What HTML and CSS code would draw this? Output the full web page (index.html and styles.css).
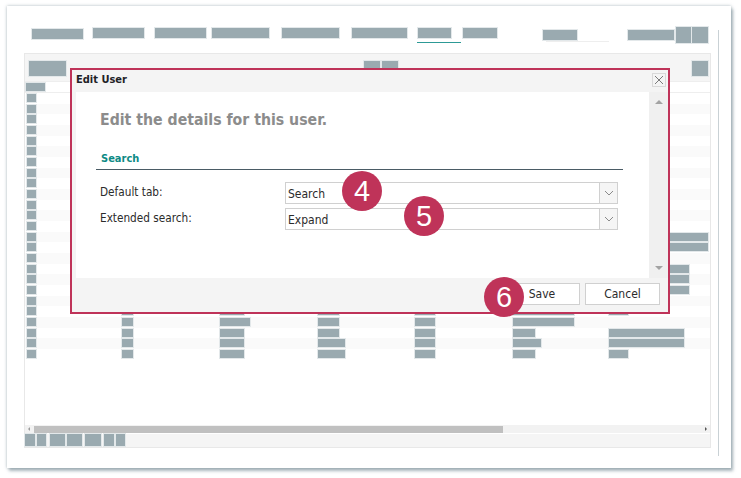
FILE: index.html
```html
<!DOCTYPE html>
<html lang="en">
<head>
<meta charset="utf-8">
<title>Edit User</title>
<link rel="stylesheet" href="styles.css">
</head>
<body>
<div class="page">
  <div class="frame">
    <div class="nav">
      <span class="bar w51 nav-low gap10"></span>
      <span class="bar w51 gap11"></span>
      <span class="bar w51 gap6"></span>
      <span class="bar w57 gap13"></span>
      <span class="bar w57 gap13"></span>
      <span class="bar w55 gap10"></span>
      <span class="tab gap2"><span class="bar w33"></span></span>
      <span class="bar w34 gap46"></span>
      <span class="search gap19"><span class="bar w34"></span></span>
      <span class="bar w46 nav-low gap2"></span>
      <span class="bar w15 nav-tall gap1"></span>
      <span class="bar w16 nav-tall"></span>
    </div>
    <div class="panel-wrap">
      <div class="panel">
        <div class="toolbar">
          <span class="bar w37 tool-main"></span>
          <span class="tool-mid"><span class="bar w16 tool-btn"></span><span class="bar w16 tool-btn"></span></span>
          <span class="bar w16 tool-btn"></span>
        </div>
        <div class="head"><span class="bar w19"></span></div>
        <div class="rows">
          <div class="row"><span class="bar w9"></span></div>
          <div class="row"><span class="bar w9"></span></div>
          <div class="row"><span class="bar w9"></span></div>
          <div class="row"><span class="bar w9"></span></div>
          <div class="row"><span class="bar w9"></span></div>
          <div class="row"><span class="bar w9"></span></div>
          <div class="row"><span class="bar w9"></span></div>
          <div class="row"><span class="bar w9"></span></div>
          <div class="row"><span class="bar w9"></span></div>
          <div class="row"><span class="bar w9"></span></div>
          <div class="row"><span class="bar w9"></span></div>
          <div class="row"><span class="bar w9"></span></div>
          <div class="row"><span class="bar w9"></span></div>
          <div class="row"><span class="bar w9"></span><i></i><i></i><i></i><i></i><i></i><span class="bar w99"></span></div>
          <div class="row"><span class="bar w9"></span><i></i><i></i><i></i><i></i><i></i><span class="bar w99"></span></div>
          <div class="row"><span class="bar w9"></span></div>
          <div class="row"><span class="bar w9"></span><i></i><i></i><i></i><i></i><i></i><span class="bar w80"></span></div>
          <div class="row"><span class="bar w9"></span><i></i><i></i><i></i><i></i><i></i><span class="bar w80"></span></div>
          <div class="row"><span class="bar w9"></span><i></i><i></i><i></i><i></i><i></i><span class="bar w80"></span></div>
          <div class="row"><span class="bar w9"></span></div>
          <div class="row"><span class="bar w9"></span><span class="bar w11"></span><span class="bar w24"></span><span class="bar w21"></span><span class="bar w20"></span><span class="bar w61"></span><span class="bar w19"></span></div>
          <div class="row"><span class="bar w9"></span><span class="bar w11"></span><span class="bar w30"></span><span class="bar w21"></span><span class="bar w20"></span><span class="bar w61"></span></div>
          <div class="row"><span class="bar w9"></span><span class="bar w11"></span><span class="bar w24"></span><span class="bar w21"></span><span class="bar w20"></span><span class="bar w22"></span><span class="bar w75"></span></div>
          <div class="row"><span class="bar w9"></span><span class="bar w11"></span><span class="bar w24"></span><span class="bar w27"></span><span class="bar w20"></span><span class="bar w28"></span><span class="bar w75"></span></div>
          <div class="row"><span class="bar w9"></span><span class="bar w11"></span><span class="bar w24"></span><span class="bar w27"></span><span class="bar w20"></span><span class="bar w22"></span><span class="bar w19"></span></div>
        </div>
        <div class="hscroll">
          <span class="arrow arrow-left"></span>
          <span class="thumb"></span>
          <span class="arrow arrow-right"></span>
        </div>
        <div class="pager">
          <span class="bar w10 gap2"></span>
          <span class="bar w9 gap4"></span>
          <span class="bar w15 gap2"></span>
          <span class="bar w15 gap3"></span>
          <span class="bar w16 gap3"></span>
          <span class="bar w10 gap2"></span>
          <span class="bar w9"></span>
        </div>
      </div>
      <div class="vline"></div>
    </div>
  </div>

  <div class="dialog">
    <div class="dialog-title">
      <span>Edit User</span>
      <span class="close">
        <svg width="10" height="10" viewBox="0 0 10 10"><path d="M1 1l8 8M9 1L1 9" stroke="#7b7b7b" stroke-width="1" fill="none"/></svg>
      </span>
    </div>
    <div class="dialog-body">
      <div class="content">
        <h1 class="heading">Edit the details for this user.</h1>
        <h2 class="section">Search</h2>
        <div class="field">
          <label class="field-label">Default tab:</label>
          <div class="select"><span class="select-value">Search</span><span class="select-btn"><svg width="10" height="6" viewBox="0 0 10 6"><path d="M1 1l4 4 4-4" stroke="#8a8a8a" stroke-width="1" fill="none"/></svg></span></div>
        </div>
        <div class="field">
          <label class="field-label">Extended search:</label>
          <div class="select"><span class="select-value">Expand</span><span class="select-btn"><svg width="10" height="6" viewBox="0 0 10 6"><path d="M1 1l4 4 4-4" stroke="#8a8a8a" stroke-width="1" fill="none"/></svg></span></div>
        </div>
      </div>
      <div class="vscroll">
        <span class="tri tri-up"></span>
        <span class="tri tri-down"></span>
      </div>
    </div>
    <div class="dialog-foot">
      <button class="btn btn-save">Save</button>
      <button class="btn btn-cancel">Cancel</button>
    </div>
  </div>

  <span class="badge badge-4">4</span>
  <span class="badge badge-5">5</span>
  <span class="badge badge-6">6</span>
</div>
</body>
</html>
```

FILE: styles.css
```css
* { box-sizing: border-box; }
html, body { margin: 0; padding: 0; background: #fff; }
body { font-family: "DejaVu Sans", sans-serif; font-stretch: condensed; color: #2b2b2b; }

.page { position: relative; width: 741px; height: 478px; overflow: hidden; }

.frame {
  margin: 6px 0 0 7px;
  width: 724px;
  height: 462px;
  padding-top: 22px;
  background: #fff;
  box-shadow: 0 0 3px rgba(120,140,150,.6), 2px 3px 3px rgba(120,140,150,.6);
}

.bar {
  display: block;
  flex: none;
  height: 8px;
  background: #9aaab0;
  box-shadow: 0 0 0 1px #e3e8ea;
}
.w9 { width: 9px; } .w10 { width: 10px; } .w11 { width: 11px; } .w15 { width: 15px; }
.w16 { width: 16px; } .w19 { width: 19px; } .w20 { width: 20px; } .w21 { width: 21px; }
.w22 { width: 22px; } .w24 { width: 24px; } .w27 { width: 27px; } .w28 { width: 28px; }
.w30 { width: 30px; } .w33 { width: 33px; } .w34 { width: 34px; } .w37 { width: 37px; }
.w46 { width: 46px; } .w51 { width: 51px; } .w55 { width: 55px; } .w57 { width: 57px; }
.w61 { width: 61px; } .w75 { width: 75px; } .w80 { width: 80px; } .w99 { width: 99px; }

.gap1 { margin-right: 1px; } .gap2 { margin-right: 2px; } .gap3 { margin-right: 3px; }
.gap4 { margin-right: 4px; } .gap6 { margin-right: 6px; } .gap10 { margin-right: 10px; }
.gap11 { margin-right: 11px; } .gap13 { margin-right: 13px; } .gap19 { margin-right: 19px; }
.gap46 { margin-right: 46px; }

.nav { display: flex; align-items: flex-start; height: 25px; padding-left: 25px; }
.nav .bar { height: 10px; }
.nav-low { margin-top: 1px; }
.nav .bar.nav-low { margin-top: 2px; }
.nav .bar:first-child.nav-low { margin-top: 1px; }
.nav .bar.nav-tall { height: 16px; margin-top: -1px; }
.tab { display: block; width: 44px; height: 15px; padding-left: 1px; border-bottom: 1px solid #2d9a96; flex: none; }
.search { display: block; width: 66px; height: 14px; margin-top: 2px; flex: none; }
.search .bar { margin-right: 0; }
.search::after { content: ""; display: block; width: 63px; height: 1px; margin: 1px 0 0 3px; background: #eeeeee; }

.panel-wrap { position: relative; padding-left: 17px; }
.panel {
  width: 687px;
  height: 395px;
  border: 1px solid #e8e8e8;
  display: flex;
  flex-direction: column;
}
.vline { position: absolute; left: 711px; top: -23px; width: 1px; height: 426px; background: #c9d1d5; }

.toolbar {
  height: 27px;
  flex: none;
  background: #f5f5f5;
  display: flex;
  align-items: flex-start;
  padding: 7px 2px 0 4px;
}
.toolbar .bar { height: 15px; }
.tool-main { margin-right: 298px; }
.tool-mid { display: flex; gap: 2px; margin-right: 294px; }

.head { height: 12px; flex: none; padding: 1px 0 0 1px; border-top: 1px solid #eeeeee; border-bottom: 1px solid #eeeeee; }

.rows { flex: 1; }
.row {
  display: grid;
  grid-template-columns: 95px 98px 98px 97px 98px 96px 1fr;
  height: 10.68px;
  padding: 1px 0 0 2px;
}
.row:nth-child(even) { background: #fafafa; }

.hscroll {
  height: 8px;
  flex: none;
  background: #f2f2f2;
  display: flex;
  align-items: center;
  position: relative;
}
.thumb { display: block; width: 469px; height: 7px; margin-left: 4px; background: #c0c0c0; }
.arrow { display: block; width: 0; height: 0; border-top: 2px solid transparent; border-bottom: 2px solid transparent; flex: none; }
.arrow-left { margin-left: 3px; border-right: 2px solid #9b9b9b; }
.arrow-right { margin-left: auto; margin-right: 3px; border-left: 2px solid #555; }

.pager {
  height: 13px;
  flex: none;
  margin-top: 1px;
  background: #f5f5f5;
  display: flex;
  align-items: flex-start;
}
.pager .bar { height: 12px; }

.dialog {
  position: absolute;
  left: 70px;
  top: 68px;
  width: 600px;
  height: 246px;
  border: 2px solid #bf3359;
  background: #f4f4f4;
  display: flex;
  flex-direction: column;
}
.dialog-title {
  height: 22px;
  flex: none;
  display: flex;
  justify-content: space-between;
  padding: 2px 2px 0 4px;
  font-size: 11px;
  line-height: 15px;
  font-weight: 700;
  color: #1e2227;
}
.close {
  width: 14px;
  height: 14px;
  margin-top: 1px;
  border: 1px solid #d9d9d9;
  display: flex;
  align-items: center;
  justify-content: center;
}
.dialog-body { height: 186px; flex: none; display: flex; padding-left: 4px; }
.content { width: 573px; background: #fff; padding: 16px 26px 0 20px; }
.heading { margin: 0; padding-left: 4px; height: 35px; font-size: 15.7px; line-height: 24px; font-weight: 700; color: #8c8c8c; }
.section {
  margin: 0 0 12px;
  height: 27px;
  padding: 8px 0 0 5px;
  border-bottom: 1px solid #4a5b65;
  font-size: 11px;
  line-height: 16px;
  font-weight: 700;
  color: #0d8a85;
}
.field { display: flex; height: 22px; margin: 0 5px 4px 4px; font-size: 12px; }
.field-label { width: 185px; line-height: 21px; font-size: 11.7px; color: #2b2b2b; }
.select {
  width: 333px;
  height: 22px;
  border: 1px solid #d0d0d0;
  background: #fff;
  display: flex;
  justify-content: space-between;
}
.select-value { padding-left: 2px; line-height: 22px; }
.select-btn {
  width: 18px;
  background: #f5f5f5;
  border-left: 1px solid #d0d0d0;
  display: flex;
  align-items: center;
  justify-content: center;
}
.vscroll {
  width: 19px;
  background: #f0f0f0;
  display: flex;
  flex-direction: column;
  justify-content: space-between;
  align-items: center;
  padding: 8px 0;
}
.tri { display: block; width: 0; height: 0; border-left: 4px solid transparent; border-right: 4px solid transparent; }
.tri-up { border-bottom: 4px solid #a3a3a3; }
.tri-down { border-top: 4px solid #a3a3a3; }

.dialog-foot {
  height: 34px;
  flex: none;
  display: flex;
  justify-content: flex-end;
  align-items: flex-start;
  gap: 5px;
  padding: 5px 8px 0 0;
}
.btn {
  height: 22px;
  padding: 0;
  border: 1px solid #d0d0d0;
  background: #fff;
  font: inherit;
  font-size: 12px;
  color: #2b2b2b;
}
.btn-save { width: 78px; padding-left: 2px; }
.btn-cancel { width: 75px; }

.badge {
  position: absolute;
  width: 40px;
  height: 40px;
  border-radius: 50%;
  background: #bf3359;
  color: #fff;
  font-family: "Liberation Sans", Arial, sans-serif;
  font-stretch: normal;
  font-size: 29px;
  line-height: 40px;
  text-align: center;
}
.badge-4 { left: 342px; top: 171px; }
.badge-5 { left: 404px; top: 196px; }
.badge-6 { left: 484px; top: 277px; }
```
